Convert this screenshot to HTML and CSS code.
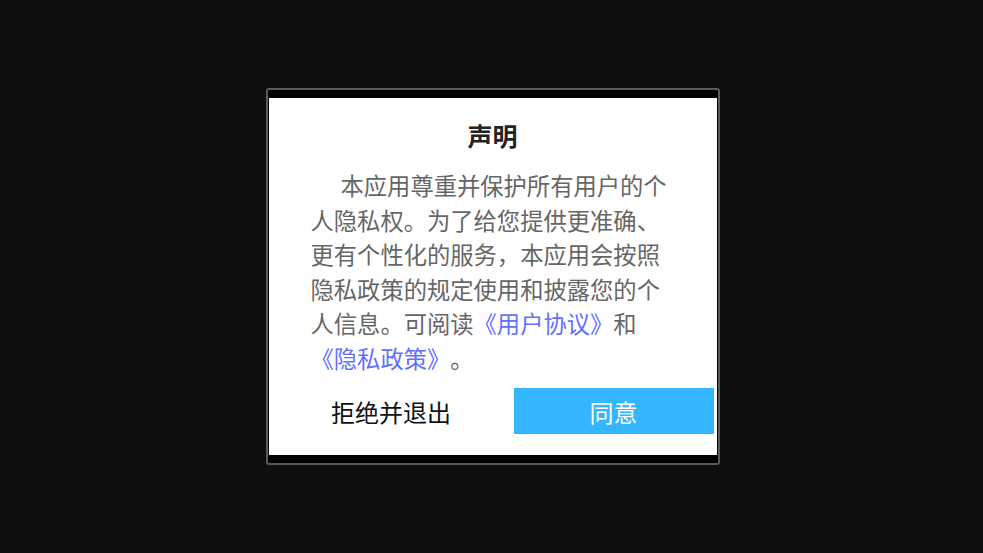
FILE: index.html
```html
<!DOCTYPE html>
<html lang="zh-CN">
<head>
    <meta charset="UTF-8">
    <meta name="viewport" content="width=device-width, initial-scale=1.0">
    <title>声明</title>
    <link rel="stylesheet" href="styles.css">
</head>
<body>

    <div class="dialog-frame">
        <div class="dialog">
            <div class="title">声明</div>
            <p class="content">本应用尊重并保护所有用户的个人隐私权。为了给您提供更准确、更有个性化的服务，本应用会按照隐私政策的规定使用和披露您的个人信息。可阅读<a class="link" href="#">《用户协议》</a>和<a class="link" href="#">《隐私政策》</a>。</p>
            <div class="actions">
                <button class="btn btn-refuse">拒绝并退出</button>
                <button class="btn btn-agree">同意</button>
            </div>
        </div>
    </div>

</body>
</html>
```

FILE: styles.css
```css
body {
    background-color: #0e0e0e;
    margin: 0;
    height: 553px;
    display: flex;
    align-items: flex-start;
    justify-content: center;
    font-family: "Noto Sans CJK SC", "Noto Sans", sans-serif;
}
.dialog-frame {
    margin-top: 88px;
    margin-left: 2px;
    width: 448px;
    border: 2px solid #5a5a5a;
    border-radius: 3px;
    background-color: #000;
    padding: 8px 1px 8px 1px;
}
.dialog {
    background-color: #fff;
    padding: 20px 0 21px 0;
}
.title {
    text-align: center;
    font-size: 25px;
    line-height: 34px;
    font-weight: bold;
    color: #222;
}
.content {
    margin: 16px 42px 0 42px;
    font-size: 23.3px;
    line-height: 34.5px;
    color: #666;
    text-indent: 30px;
    text-spacing-trim: space-all;
    font-kerning: none;
    font-feature-settings: "chws" 0, "palt" 0, "halt" 0;
}
.link {
    color: #6270ff;
    text-decoration: none;
}
.actions {
    display: flex;
    margin-top: 13px;
    padding-right: 3px;
}
.btn {
    border: none;
    font-family: inherit;
    font-size: 24px;
    height: 46px;
    padding: 0;
    cursor: pointer;
}
.btn-refuse {
    flex: 1;
    background-color: #fff;
    color: #111;
}
.btn-agree {
    width: 200px;
    background-color: #33b5ff;
    color: #fff;
}
```
